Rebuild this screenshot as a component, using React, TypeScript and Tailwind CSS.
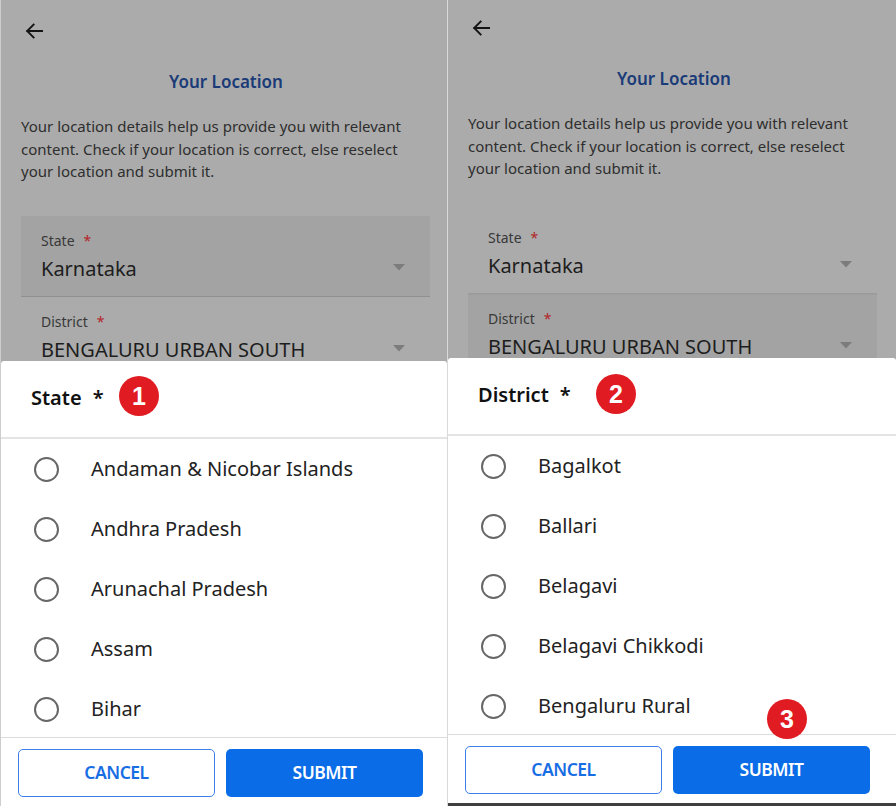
import React from "react";

const font = { fontFamily: '"Noto Sans", "Open Sans", sans-serif' };

const STATES = [
  "Andaman & Nicobar Islands",
  "Andhra Pradesh",
  "Arunachal Pradesh",
  "Assam",
  "Bihar",
];

const DISTRICTS = [
  "Bagalkot",
  "Ballari",
  "Belagavi",
  "Belagavi Chikkodi",
  "Bengaluru Rural",
];

function BackArrow() {
  return (
    <svg width="18" height="16" viewBox="0 0 18 16" fill="none">
      <path
        d="M17.5 8H2.2M8.6 1.6 2.2 8l6.4 6.4"
        stroke="#141414"
        strokeWidth="1.9"
        strokeLinecap="square"
      />
    </svg>
  );
}

function Caret() {
  return (
    <svg width="12" height="7" viewBox="0 0 12 7">
      <path d="M0 0h12L6 6.5z" fill="#7c7c7c" />
    </svg>
  );
}

function Badge({ n, className }: { n: string; className: string }) {
  return (
    <div
      className={
        "absolute flex h-[40px] w-[40px] items-center justify-center rounded-full bg-[#e11b22] text-[25px] font-bold leading-none text-white " +
        className
      }
      style={{ fontFamily: '"Liberation Sans", Arial, sans-serif' }}
    >
      {n}
    </div>
  );
}

function StateField({ active }: { active: boolean }) {
  return (
    <div
      className={
        active
          ? "h-[81px] border-b border-[#909090] bg-[#a3a3a3] pl-[20px] pr-[25px] pt-[15px]"
          : "h-[81px] border-b border-[#9a9a9a] pl-[20px] pr-[25px] pt-[15px]"
      }
    >
      <div className="flex h-[20px] items-center text-[14px] text-[#383838]">
        State
        <span className="ml-[9px] text-[#b3262a]">*</span>
      </div>
      <div className="mt-[5px] flex h-[26px] items-center justify-between">
        <span className="text-[20px] text-[#1d1d1d]">Karnataka</span>
        <span className="mt-[-3px]">
          <Caret />
        </span>
      </div>
    </div>
  );
}

function DistrictField({ active }: { active: boolean }) {
  return (
    <div
      className={
        active
          ? "h-[81px] border-t border-[#9e9e9e] bg-[#a3a3a3] pl-[20px] pr-[25px] pt-[14px]"
          : "h-[81px] pl-[20px] pr-[25px] pt-[15px]"
      }
    >
      <div className="flex h-[20px] items-center text-[14px] text-[#383838]">
        District
        <span className="ml-[9px] text-[#b3262a]">*</span>
      </div>
      <div className="mt-[5px] flex h-[26px] items-center justify-between">
        <span className="text-[20px] text-[#1d1d1d]">BENGALURU URBAN SOUTH</span>
        <span className="mt-[-3px]">
          <Caret />
        </span>
      </div>
    </div>
  );
}

function Screen({
  right,
  title,
  items,
}: {
  right: boolean;
  title: string;
  items: string[];
}) {
  return (
    <div
      className={
        right
          ? "relative h-full w-[448px] overflow-hidden bg-[#ababab]"
          : "relative h-full w-[447px] overflow-hidden border-l border-[#cdcdcd] bg-[#ababab]"
      }
      style={font}
    >
      {/* page behind the sheet */}
      <div className={right ? "mt-[-3px]" : "mt-0"}>
        <div className="h-[39px] pl-[24px] pt-[23px]">
          <BackArrow />
        </div>
        <div className="mt-[31px] h-[24px] pl-[4px] text-center text-[17px] font-semibold leading-[24px] text-[#1a3b78]">
          Your Location
        </div>
        <p className="mt-[21px] px-[20px] text-[15px] leading-[22.5px] text-[#2e2e2e]">
          Your location details help us provide you with relevant content.
          Check if your location is correct, else reselect your location and
          submit it.
        </p>
        <div className="ml-[20px] mt-[33px] w-[409px]">
          <StateField active={!right} />
          <DistrictField active={right} />
        </div>
      </div>

      {/* bottom sheet */}
      <div
        className={
          right
            ? "absolute bottom-[3px] left-0 right-0 top-[358px] flex flex-col rounded-t-[3px] bg-white"
            : "absolute bottom-0 left-0 right-0 top-[361px] flex flex-col rounded-t-[3px] bg-white"
        }
      >
        <div className="flex h-[76px] shrink-0 items-center pb-[2px] pl-[30px] text-[20px] font-semibold text-[#111]">
          {title}
          <span className="ml-[11px]">*</span>
        </div>
        <div className="h-[2px] shrink-0 bg-[#e4e4e4]" />
        <div className="flex-1 overflow-hidden">
          {items.map((item) => (
            <div key={item} className="flex h-[60px] items-center pl-[33px]">
              <span className="h-[25px] w-[25px] shrink-0 rounded-full border-[2.3px] border-[#676767]" />
              <span className="ml-[32px] text-[20px] text-[#222]">{item}</span>
            </div>
          ))}
        </div>
        <div className="flex h-[69px] shrink-0 gap-[11px] border-t border-[#dcdcdc] pl-[17px] pt-[11px]">
          <button className="h-[48px] w-[197px] rounded-[5px] border border-[#3d7fe9] bg-white pb-[2px] text-[17.5px] font-semibold tracking-[-0.5px] text-[#176de3]">
            CANCEL
          </button>
          <button className="h-[48px] w-[197px] rounded-[5px] bg-[#0a6ce6] pb-[2px] text-[17.5px] font-semibold tracking-[-0.5px] text-white">
            SUBMIT
          </button>
        </div>
        {right ? (
          <>
            <Badge n="2" className="left-[148px] top-[16px]" />
            <Badge n="3" className="left-[319px] top-[341px]" />
          </>
        ) : (
          <Badge n="1" className="left-[118px] top-[15px]" />
        )}
      </div>
      {right && <div className="absolute bottom-0 left-0 right-0 h-[3px] bg-[#3f3f3f]" />}
    </div>
  );
}

export default function App() {
  return (
    <div className="flex h-[806px] w-[896px] overflow-hidden bg-white">
      <Screen right={false} title="State" items={STATES} />
      <div className="h-full w-px bg-[#d9d9d9]" />
      <Screen right title="District" items={DISTRICTS} />
    </div>
  );
}
